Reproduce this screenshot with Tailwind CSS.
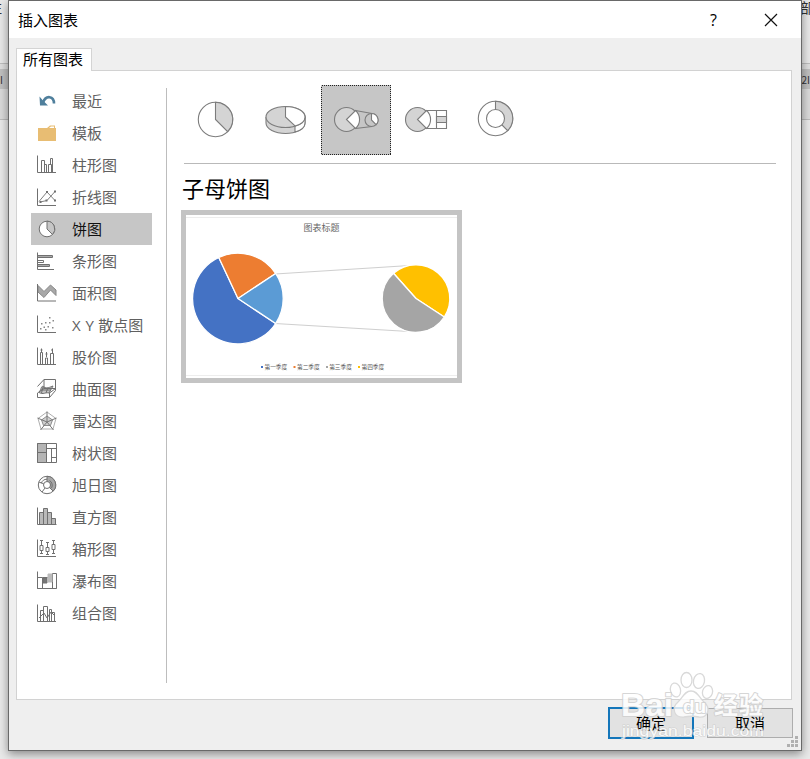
<!DOCTYPE html>
<html lang="zh-CN">
<head>
<meta charset="utf-8">
<title>插入图表</title>
<script src="https://cdn.jsdelivr.net/npm/@tailwindcss/browser@4"></script>
</head>
<body class="relative h-[759px] w-[810px] overflow-hidden bg-[#e9e9e9] font-['Noto_Sans_CJK_SC',sans-serif] text-[15px] text-black">

<!-- Document window behind the dialog -->
<div class="absolute inset-0 flex flex-col text-[#333]">
  <div class="flex h-[64px] justify-between border-b border-[#bdbdbd] bg-[#e8e8e8] text-[14px] leading-[14px]"><span class="-ml-3">注</span><span class="-mr-1">部</span></div>
  <div class="h-[5px] bg-[#dedede]"></div>
  <div class="flex h-5 items-center justify-between bg-[#bfbfbf] text-[10px]"><span>I</span><span>2I</span></div>
  <div class="h-[31px] border-b border-[#bbb] bg-[#dadada]"></div>
</div>

<main class="absolute left-2 top-0 flex h-[751px] w-[794px] flex-col border border-[#696969] bg-[#efefef] shadow-[0_3px_9px_rgba(0,0,0,0.42)]">
  <header class="flex h-[37px] shrink-0 items-center bg-white pl-[9px]">
    <h1 class="text-[15px] leading-5">插入图表</h1>
    <span class="ml-auto mr-[47px] font-['Open_Sans',sans-serif] text-[16px] leading-5">?</span>
    <svg class="mr-[23px] size-[14px]" viewBox="0 0 14 14" fill="none" stroke="#111" stroke-width="1.2"><path d="M1 1l12 12M13 1L1 13"/></svg>
  </header>

  <div class="flex h-8 shrink-0 items-end pl-[7px]">
    <div class="relative z-10 -mb-px flex h-[23px] w-[76px] items-center border border-b-0 border-[#d4d4d4] bg-white pb-[2px] pl-[6px] leading-5">所有图表</div>
  </div>

  <section class="ml-[7px] flex h-[630px] w-[776px] shrink-0 border border-[#d2d2d2] bg-white">
    <nav class="ml-[14px] mt-[14px] w-[121px] text-[#606060]">
      <ul class="[&>li]:flex [&>li]:h-8 [&>li]:items-center [&>li]:pl-[6px] [&>li]:leading-8 [&_svg]:mr-[15px] [&_svg]:size-5 [&_svg]:shrink-0 [&_svg]:overflow-visible [&_span]:whitespace-nowrap">
        <li><svg viewBox="0 0 20 20" fill="none"><path d="M6 11.500C9 3.500 17 5 17 12.500" stroke="#4f7f9c" stroke-width="2.600"/><path d="M2.500 5.500l3 3.500 5.500 5.500H3z" fill="#4f7f9c"/></svg><span>最近</span></li>
        <li><svg viewBox="0 0 20 20" fill="none"><path d="M1 5h9l3-2.500h5V5h1v13H1z" fill="#e8bd73"/><path d="M12 5l2-1.500h3V5" fill="#fff"/></svg><span>模板</span></li>
        <li><svg viewBox="0 0 20 20" fill="none" stroke="#707070"><path d="M.5.500v17H19M4.500 17V5.500h3V17M7.500 9.500h2V17M11.500 17V9.500h3V17M13.500 9.500v-6h2V17"/></svg><span>柱形图</span></li>
        <li><svg viewBox="0 0 20 20" fill="none" stroke="#707070"><path d="M.5 1.500v17H19"/><path d="M2 14.500l8-9.500 8 8.500M3 15l7-1.500L18 4.500" stroke-width=".9"/><path d="M9 4h2v2H9zM2.500 14h2v2h-2zM8.500 12.500h2v2h-2zM17 12.500h2v2h-2zM17 3.500h2v2h-2z" fill="#707070" stroke="none"/></svg><span>折线图</span></li>
        <li class="bg-[#c6c6c6] text-[#111]"><svg viewBox="0 0 20 20" stroke="#707070"><circle cx="10" cy="10" r="7.800" fill="#fff"/><path d="M10 10V2.200a7.800 7.800 0 0 1 5.500 13.300z" fill="#c6c6c6"/></svg><span>饼图</span></li>
        <li><svg viewBox="0 0 20 20" fill="none" stroke="#707070"><path d="M.5 1.500v17H17M.5 4.500h15v2H.5M.5 9.500h6v2H.5M.5 13.500h12v2H.5"/><path d="M1 5.500h14M1 14.500h11" stroke="#aaa"/></svg><span>条形图</span></li>
        <li><svg viewBox="0 0 20 20" fill="none" stroke="#888"><path d="M1 2.500l6 6 6.500-6.500L19 7v5.500L13.500 7 7 14.500 1 9z" fill="#a8a8a8"/><path d="M.5 1v17H19" stroke="#707070"/></svg><span>面积图</span></li>
        <li><svg viewBox="0 0 20 20" fill="none"><path d="M.5.500v17H19" stroke="#707070"/><path d="M4 8h1.500v1.500H4zM3 13h1.500v1.500H3zM8 7h1.500v1.500H8zM6.500 11.500H8V13H6.500zM12 2h1.500v1.500H12zM12 7h1.500v1.500H12zM10.500 11H12v1.500h-1.500zM15.500 5H17v1.500h-1.500zM15 12h1.500v1.500H15zM8 14h1.500v1.500H8z" fill="#888"/></svg><span class="[word-spacing:1px]"><span class="font-['Open_Sans',sans-serif]">X Y</span> 散点图</span></li>
        <li><svg viewBox="0 0 20 20" fill="none" stroke="#707070"><path d="M.5.500v17H19M3.500 17V5.500h2V17M8.500 17v-6h2v6M13.500 17V6.500h3V17M4.500 5V1.500M9.500 10V5M15.500 6V1.500M3.500 3h2M8.500 7h2M14 3h2"/></svg><span>股价图</span></li>
        <li><svg viewBox="0 0 20 20" fill="none" stroke="#707070"><path d="M2 13.500C5 9 4 6 7 8s6 0 9-1l-4 7c-3-1-6 2-10-.5z" fill="#c4c4c4"/><path d="M.5 7.500L7 .5h11.500v11l-6 7H.5V14L7 9.500h11.500M7 .5v9M12.500 18.500V14L18.500 9.500M6 8l-1.500 6M11 8.500l-2 5.500M4 11h10"/></svg><span>曲面图</span></li>
        <li><svg viewBox="0 0 20 20" fill="none" stroke="#777"><path d="M10 1l9 6.500L16 18H4L1 7.500z" stroke="#999" stroke-width=".8"/><path d="M10 5l5.500 4-2 5.500h-7l-2-5.500z" fill="#d0d0d0" stroke-width=".8"/><path d="M10 .5V11L.5 7M10 11l9.500-4M10 11l6.500 8M10 11l-6.500 8"/></svg><span>雷达图</span></li>
        <li><svg viewBox="0 0 20 20" fill="#fff" stroke="#707070"><path d="M.5.500h19v19H.5z"/><path d="M.5.500h9v19h-9z" fill="#b5b5b5"/><path d="M.5 9.500h9M9.500 5.500h10M14.500 5.500v14M14.500 14.500h5" fill="none"/></svg><span>树状图</span></li>
        <li><svg viewBox="0 0 20 20" fill="#fff" stroke="#707070"><circle cx="10" cy="10" r="8.700"/><path d="M10 1.300a8.700 8.700 0 0 1 6.200 14.800L12.500 12.500A3.500 3.500 0 0 0 10 6.500z" fill="#a8a8a8"/><path d="M4.300 8.300A6 6 0 0 1 10 4.200M12.500 5.500a5.500 5.500 0 0 1 2 7.500" fill="none"/><circle cx="10" cy="10" r="3.500"/><path d="M6.700 8.800L2 7M8 13l-3 4M12.500 12.500L16 16"/></svg><span>旭日图</span></li>
        <li><svg viewBox="0 0 20 20" fill="#b9b9b9" stroke="#707070"><path d="M2.500 17.500v-12h4v12M6.500 17.500v-16h4v16M10.500 17.500v-12h4v12M14.500 17.500v-6h4v6"/><path d="M.5.500v17H19.500" fill="none"/></svg><span>直方图</span></li>
        <li><svg viewBox="0 0 20 20" fill="none" stroke="#707070"><path d="M.5.500v17H19M3 1.500h3M4.500 2v4M3 6.500h3v5H3zM4.500 12v2M3 14.500h3M9 3.500h3M10.500 4v4M9 8.500h3v4H9zM10.500 13v2M9 15.500h3M15 1.500h3M16.500 2v3M15 5.500h3v5h-3zM16.500 11v3M15 14.500h3"/></svg><span>箱形图</span></li>
        <li><svg viewBox="0 0 20 20" fill="#fff" stroke="#707070"><path d="M.5 6.500h5v11h-5zM15.500 2.500h4v15h-4z"/><path d="M6 7h4v5H6z" fill="#777"/><path d="M11 3h4v8h-4z" fill="#bbb" stroke="#bbb"/><path d="M.5.500v17h19M5.500 6.500h5" fill="none"/></svg><span>瀑布图</span></li>
        <li><svg viewBox="0 0 20 20" fill="none" stroke="#707070"><path d="M.5 1.500v17H19M3.500 18V7.500h3V18M6.500 9V3.500h4V18M12.500 18V6.500h2V18M14.500 9.500h3V18M2 15l5-5 3 5 4-6 4 4"/></svg><span>组合图</span></li>
      </ul>
    </nav>

    <div class="ml-[14px] mt-[17px] h-[595px] w-px bg-[#bdbdbd]"></div>

    <div class="ml-[14px] mt-[14px] w-[595px]">
      <div class="ml-[3px] flex h-[79px] border-b border-[#b9b9b9] [&_svg]:size-[70px]">
        <svg class="-ml-[3px]" viewBox="0 0 70 70" stroke="#7c7c7c" stroke-width="1.100"><circle cx="34.500" cy="34.500" r="17.200" fill="#fff"/><path d="M34.500 34.500V17.300a17.200 17.200 0 0 1 12.200 29.400z" fill="#d4d4d4"/></svg>
        <svg viewBox="0 0 70 70" stroke="#7c7c7c" stroke-width="1.100"><path d="M15 32v6c0 6 9 10.500 19.500 10.500S54 44 54 38v-6" fill="#d4d4d4"/><path d="M44 41v6c6-1.500 10-5 10-9v-6z" fill="#fff"/><ellipse cx="34.500" cy="32" rx="19.500" ry="10.500" fill="#d4d4d4"/><path d="M34.500 32V21.500C45 21.500 54 26 54 32c0 4-4 7.500-10 9z" fill="#fff"/></svg>
        <svg class="bg-[#c6c6c6]" viewBox="0 0 70 70" fill="none" stroke="#7c7c7c" stroke-width="1.100"><rect x=".5" y=".5" width="69" height="69" stroke="#222" stroke-width="1" stroke-dasharray="1 1" shape-rendering="crispEdges"/><circle cx="25.500" cy="34.500" r="12" fill="#d4d4d4"/><path d="M25.500 34.500l9-9a12 12 0 0 1 0 18z" fill="#fff"/><path d="M34.500 25.500L51 28.500M34.500 43.500L51 41.500"/><circle cx="50.500" cy="35" r="6.500" fill="#c6c6c6"/><path d="M50.500 35v-6.500a6.500 6.500 0 0 1 4.600 11.100z" fill="#fff"/></svg>
        <svg viewBox="0 0 70 70" fill="none" stroke="#7c7c7c" stroke-width="1.100"><path d="M32 25.500h23.500v18H32M45.500 25.500v18"/><circle cx="26.500" cy="34.500" r="12" fill="#d4d4d4"/><path d="M26.500 34.500l9-9a12 12 0 0 1 0 18z" fill="#fff"/><path d="M45.500 31.500h10v6h-10z" fill="#d4d4d4"/></svg>
        <svg viewBox="0 0 70 70" stroke="#7c7c7c" stroke-width="1.100"><circle cx="34.500" cy="33.500" r="17.200" fill="#fff"/><path d="M34.500 33.500V16.300a17.200 17.200 0 0 1 12.200 29.400z" fill="#d4d4d4"/><circle cx="34.500" cy="33.500" r="9" fill="#fff"/></svg>
      </div>

      <h2 class="mt-[6px] h-10 pl-[1px] text-[22px] leading-[34px]">子母饼图</h2>

      <figure class="h-[173px] w-[281px] border-[5px] border-[#c4c4c4] bg-white">
        <svg class="h-[163px] w-[271px]" viewBox="186 215 271 163" font-family="'Noto Sans CJK SC', sans-serif">
          <path d="M186 217.500h271M186 375.500h271" stroke="#ededed"/>
          <text x="321.500" y="231.300" text-anchor="middle" font-size="9" fill="#666">图表标题</text>
          <path d="M275 274L410 265.500M275 323.500l134 8" stroke="#cfcfcf" fill="none"/>
          <g stroke="#fff" stroke-width="1.300" stroke-linejoin="round">
            <path d="M238 298.500L275.700 323.500A45.300 45.300 0 1 1 218.800 257.500z" fill="#4472c4"/>
            <path d="M238 298.500L218.800 257.500A45.300 45.300 0 0 1 275.700 273.500z" fill="#ed7d31"/>
            <path d="M238 298.500L275.700 273.500A45.300 45.300 0 0 1 275.700 323.500z" fill="#5b9bd5"/>
            <path d="M416 298.500L393.500 273.300A33.800 33.800 0 0 1 444.300 317z" fill="#ffc000"/>
            <path d="M416 298.500L444.300 317A33.800 33.800 0 1 1 393.500 273.300z" fill="#a5a5a5"/>
          </g>
          <g font-size="5.700" fill="#555">
            <text x="264.500" y="369">第一季度</text><text x="297" y="369">第二季度</text><text x="329.200" y="369">第三季度</text><text x="361.500" y="369">第四季度</text>
          </g>
          <path d="M261 366h2v2h-2z" fill="#4472c4"/><path d="M293.500 366h2v2h-2z" fill="#ed7d31"/><path d="M326 366h2v2h-2z" fill="#a5a5a5"/><path d="M358 366h2v2h-2z" fill="#ffc000"/>
        </svg>
      </figure>
    </div>
  </section>

  <footer class="flex gap-[13px] pl-[599px] pt-[7px]">
    <button class="h-8 w-[86px] border-2 border-[#1476ba] bg-[#e2e2e2] leading-7">确定</button>
    <button class="mt-px h-[30px] w-[86px] border border-[#adadad] bg-[#e2e2e2] leading-7">取消</button>
  </footer>
  <svg class="absolute bottom-[2px] right-[2px] size-3" viewBox="0 0 12 12" fill="#b0b0b0"><path d="M8 0h3v3H8zM4 4h3v3H4zM8 4h3v3H8zM0 8h3v3H0zM4 8h3v3H4zM8 8h3v3H8z"/></svg>
</main>

<!-- Watermark over the lower right corner -->
<svg class="pointer-events-none absolute left-[610px] top-[665px] h-[80px] w-[170px]" viewBox="610 665 170 80">
  <g fill="#fff" fill-opacity=".8" stroke="#d9d9d9" stroke-width="1.300">
    <ellipse cx="675.500" cy="690" rx="5" ry="7" transform="rotate(-15 675.500 690)"/>
    <ellipse cx="686.500" cy="680" rx="5.500" ry="7.500"/>
    <ellipse cx="699" cy="681" rx="5.500" ry="7.500" transform="rotate(12 699 681)"/>
    <ellipse cx="707.500" cy="692" rx="5" ry="6.500" transform="rotate(15 707.500 692)"/>
    <path d="M691 691c7 0 8 7 13 11 8 7 3 16-5 15-5-1-10-1-15 0-10 1-13-9-6-15 5-4 6-11 13-11z"/>
  </g>
  <g fill="#fff" stroke="#cfcfcf" stroke-width="2" stroke-linejoin="round" paint-order="stroke" font-weight="700" opacity=".85">
    <text x="621" y="716" font-family="'Liberation Sans', sans-serif" font-size="32" textLength="52" lengthAdjust="spacingAndGlyphs">Bai</text>
    <text x="683" y="713" font-family="'Liberation Sans', sans-serif" font-size="19" textLength="23">du</text>
    <text x="714" y="714" font-family="'Noto Sans CJK SC', sans-serif" font-size="24" textLength="49">经验</text>
  </g>
  <text x="622" y="736" font-family="'Liberation Sans', sans-serif" font-size="15" textLength="142" lengthAdjust="spacingAndGlyphs" fill="#fff" stroke="#cdcdcd" stroke-width="1" paint-order="stroke" opacity=".8">jingyan.baidu.com</text>
</svg>
</body>
</html>
